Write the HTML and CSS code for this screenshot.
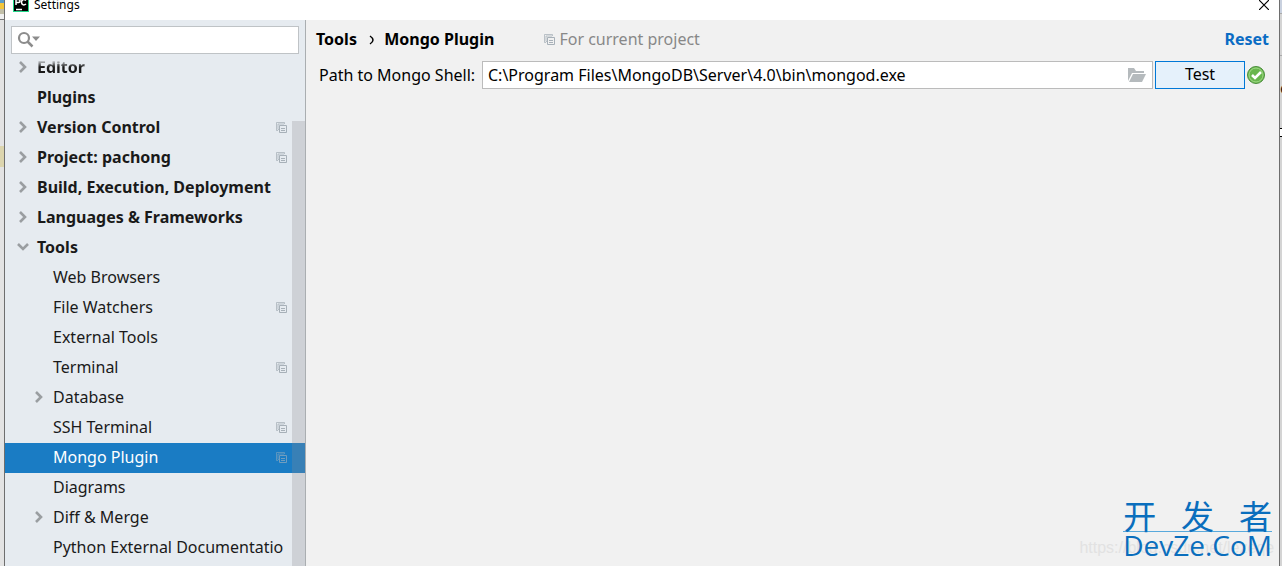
FILE: index.html
```
<!DOCTYPE html>
<html lang="en">
<head>
<meta charset="utf-8">
<title>Settings</title>
<link rel="stylesheet" href="styles.css">
</head>
<body>
<svg class="defs" aria-hidden="true">
  <symbol id="copy" viewBox="0 0 11 11"><path d="M2 8.500H.5v-8h8V2M3 7.500h-1v-5.500h6" fill="none" stroke="currentColor" opacity=".75"/><path d="M3.500 3.500h7v7h-7zM5 6.500h4M5 8.500h4" fill="none" stroke="currentColor"/></symbol>
  <symbol id="right" viewBox="0 0 10 12"><path d="M2 1l5 5-5 5" fill="none" stroke="currentColor" stroke-width="2.600"/></symbol>
  <symbol id="down" viewBox="0 0 12 10"><path d="M1 2l5 5 5-5" fill="none" stroke="currentColor" stroke-width="2.600"/></symbol>
</svg>
<div class="desktop">
  <div class="edge edge-left"><i class="tab"></i><i class="rule"></i><i class="gutter"></i><i class="mark"></i></div>
  <main class="dialog">
    <header class="titlebar">
      <svg class="logo" viewBox="0 0 16 16"><path fill="#21d789" d="M0 0h16v16H0z"/><path d="M1 0h14v15H1z"/><path d="M3 13.500h6" stroke="#fff" stroke-width="1.500"/><path d="M3 9V3.500h2.500a1.500 1.500 0 010 3H3M13 4.500C10.500 2.500 8.500 4 8.500 6.200S10.500 10 13 8" fill="none" stroke="#fff" stroke-width="1.500"/></svg>
      <span>Settings</span>
      <button class="close" aria-label="Close"><svg viewBox="0 0 10 10"><path d="M0 0l10 10M10 0L0 10" stroke="#000" stroke-width="1.200"/></svg></button>
    </header>
    <div class="body">
      <aside class="sidebar">
        <label class="search"><svg viewBox="0 0 24 18"><circle cx="7" cy="7" r="5" fill="none" stroke="#8c8c8c" stroke-width="2.200"/><path d="M10.500 10.500l5 5" stroke="#8c8c8c" stroke-width="2.500"/><path d="M15 5.500h8l-4 4.500z" fill="#8c8c8c"/></svg><input type="text" aria-label="Search settings"></label>
        <ul class="tree">
          <li class="group first"><svg class="arrow"><use href="#right"/></svg><span>Editor</span></li>
          <li class="group"><i class="arrow"></i><span>Plugins</span></li>
          <li class="group"><svg class="arrow"><use href="#right"/></svg><span>Version Control</span><svg class="copy"><use href="#copy"/></svg></li>
          <li class="group"><svg class="arrow"><use href="#right"/></svg><span>Project: pachong</span><svg class="copy"><use href="#copy"/></svg></li>
          <li class="group"><svg class="arrow"><use href="#right"/></svg><span>Build, Execution, Deployment</span></li>
          <li class="group"><svg class="arrow"><use href="#right"/></svg><span>Languages &amp; Frameworks</span></li>
          <li class="group"><svg class="arrow"><use href="#down"/></svg><span>Tools</span></li>
          <li class="item"><i class="arrow"></i><span>Web Browsers</span></li>
          <li class="item"><i class="arrow"></i><span>File Watchers</span><svg class="copy"><use href="#copy"/></svg></li>
          <li class="item"><i class="arrow"></i><span>External Tools</span></li>
          <li class="item"><i class="arrow"></i><span>Terminal</span><svg class="copy"><use href="#copy"/></svg></li>
          <li class="item"><svg class="arrow"><use href="#right"/></svg><span>Database</span></li>
          <li class="item"><i class="arrow"></i><span>SSH Terminal</span><svg class="copy"><use href="#copy"/></svg></li>
          <li class="item selected"><i class="arrow"></i><span>Mongo Plugin</span><svg class="copy"><use href="#copy"/></svg></li>
          <li class="item"><i class="arrow"></i><span>Diagrams</span></li>
          <li class="item"><svg class="arrow"><use href="#right"/></svg><span>Diff &amp; Merge</span></li>
          <li class="item"><i class="arrow"></i><span>Python External Documentatio</span></li>
        </ul>
        <div class="scrollbar"></div>
      </aside>
      <section class="content">
        <div class="heading">
          <h1>Tools <svg class="crumb" viewBox="0 0 5 10"><path d="M1 1q3 2 3 4T1 9" fill="none" stroke="#000" stroke-width="1.500"/></svg> Mongo Plugin</h1>
          <p><svg class="copy"><use href="#copy"/></svg>For current project</p>
          <a href="#reset">Reset</a>
        </div>
        <div class="form">
          <label for="path">Path to Mongo Shell:</label>
          <div class="field">
            <input id="path" type="text" value="C:\Program Files\MongoDB\Server\4.0\bin\mongod.exe">
            <button aria-label="Browse"><svg viewBox="0 0 18 14"><path d="M0 13V0h6l2 3h8v2H4z" fill="#b5babd"/><path d="M5 6h13l-4 8H1z" fill="#b5babd"/></svg></button>
          </div>
          <button class="test">Test</button>
          <svg class="ok" viewBox="0 0 18 18"><circle cx="9" cy="9" r="8.500" fill="#69b64e" stroke="#4c8e3d"/><circle cx="9" cy="9" r="7" fill="none" stroke="#a0da86"/><path d="M5 9l3 3 6-6" fill="none" stroke="#fff" stroke-width="2.600"/></svg>
        </div>
      </section>
    </div>
    <div class="watermark"><span class="url">https://blog.csdn.net/lezeqe</span><div class="brand"><b><span>开</span><span>发</span><span>者</span></b><strong>DevZe.CoM</strong></div></div>
  </main>
  <div class="edge edge-right"><i class="cap"></i><i class="pane"></i><span>e</span><i class="box"></i></div>
</div>
</body>
</html>
```
FILE: styles.css
```
* { box-sizing: border-box; }
body { margin: 0; font: 16px/24px "Noto Sans", "Noto Sans CJK SC", sans-serif; color: #1a1a1a; }
.defs { position: absolute; width: 0; height: 0; }
button, input { font: inherit; color: #000; }
.desktop { display: flex; height: 100vh; overflow: hidden; background: #e3e3e3; }
.edge { display: flex; flex-direction: column; flex: none; overflow: hidden; }
.edge-left { width: 5px; border-right: 1px solid #6e6e6e; }
.edge-left .tab { height: 14px; background: linear-gradient(#5b9dcc 3px, #f3c63c 3px 9px, #c2bfa8 9px); }
.edge-left .rule { height: 6px; background: #f0f0f0; border-bottom: 1px solid #777; }
.edge-left .gutter { height: 126px; }
.edge-left .mark { height: 21px; background: #dcd5ae; }
.edge-right { width: 3px; border-left: 1px solid #6e6e6e; background: #d4d4d4; }
.edge-right .cap { height: 14px; background: #c9d1df; border-bottom: 1px solid #aaa; }
.edge-right .pane { height: 42px; border-bottom: 1px solid #aaa; }
.edge-right span { margin-top: 20px; line-height: 24px; }
.edge-right .box { flex: none; margin-top: 28px; height: 9px; border: 1px solid #000; border-width: 1px 0; background: #fff; }
.dialog { position: relative; display: flex; flex-direction: column; flex: 1; min-width: 0; background: #f1f1f1; }
.titlebar { display: flex; align-items: center; height: 20px; flex: none; padding: 0 10px 10px 8px; gap: 5px; background: #fff; font-size: 12px; line-height: 12px; color: #000; }
.logo { width: 16px; height: 16px; margin-top: -2px; }
.close { margin-left: auto; padding: 0; border: 0; background: none; display: flex; }
.close svg { width: 10px; height: 10px; }
.body { display: flex; flex: 1; min-height: 0; }
.sidebar { position: relative; width: 301px; flex: none; border-right: 1px solid #aaaeb1; background: #e6ebf0; overflow: hidden; }
.search { display: flex; align-items: center; height: 28px; margin: 6px 6px 0; padding-left: 5px; border: 1px solid #bfc3c6; background: #fff; }
.search svg { width: 24px; height: 18px; flex: none; }
.search input { flex: 1; min-width: 0; border: 0; outline: 0; background: none; }
.tree { margin: 0; padding: 0; list-style: none; }
.tree li { display: flex; align-items: center; height: 30px; padding: 0 18px 2px 12px; gap: 8px; white-space: nowrap; }
.tree .first { height: 29px; padding-bottom: 3px; }
.tree .first span { background: linear-gradient(#e6ebf0 5px, #1a1a1a 12px); background-clip: text; color: transparent; }
.tree .item { padding-left: 28px; }
.tree .group { font-weight: 700; }
.arrow { width: 12px; height: 12px; flex: none; color: #9a9ea1; }
.copy { width: 11px; height: 11px; flex: none; color: #a7b0b8; }
.tree .copy { margin-left: auto; }
.tree .selected { background: #1a7cc4; color: #fff; }
.selected .copy { color: #6f9dbf; }
.scrollbar { position: absolute; top: 101px; right: 0; bottom: 0; width: 13px; background: rgba(140, 140, 145, .27); }
.content { flex: 1; min-width: 0; color: #000; }
.heading { display: flex; align-items: center; height: 38px; padding: 0 10px; }
h1 { margin: 0; font-size: 16px; line-height: 24px; }
.crumb { width: 5px; height: 10px; margin: 0 6px 0 8px; }
.heading p { display: flex; align-items: center; gap: 4px; margin: 0 0 0 50px; color: #888; }
.heading a { margin-left: auto; color: #0a6cc4; font-weight: 700; text-decoration: none; }
.form { display: flex; align-items: center; gap: 2px; padding: 3px 14px 0 13px; }
.form label { min-width: 161px; }
.field { display: flex; align-items: center; flex: 1; height: 28px; border: 1px solid #bbb; background: #fff; }
.field input { flex: 1; min-width: 0; padding: 0 5px; border: 0; outline: 0; background: none; }
.field button { display: flex; padding: 0 6px; border: 0; background: none; }
.field svg { width: 18px; height: 14px; }
.test { width: 90px; height: 28px; padding: 0 0 2px; border: 1px solid #0078d7; background: #e5f1fb; }
.ok { width: 18px; height: 18px; }
.watermark { position: absolute; right: 7px; bottom: 8px; display: flex; align-items: flex-end; }
.url { margin-right: -151px; font: 16px/20px "Liberation Sans", sans-serif; color: #e2e2e2; }
.brand { position: relative; color: #0a6ebd; }
.brand b { display: flex; justify-content: space-between; border-bottom: 1px solid #58a9dc; font: 400 33px/32px "Noto Sans CJK SC", sans-serif; }
.brand strong { display: block; font: 400 28px/26px "Open Sans", sans-serif; }
```
